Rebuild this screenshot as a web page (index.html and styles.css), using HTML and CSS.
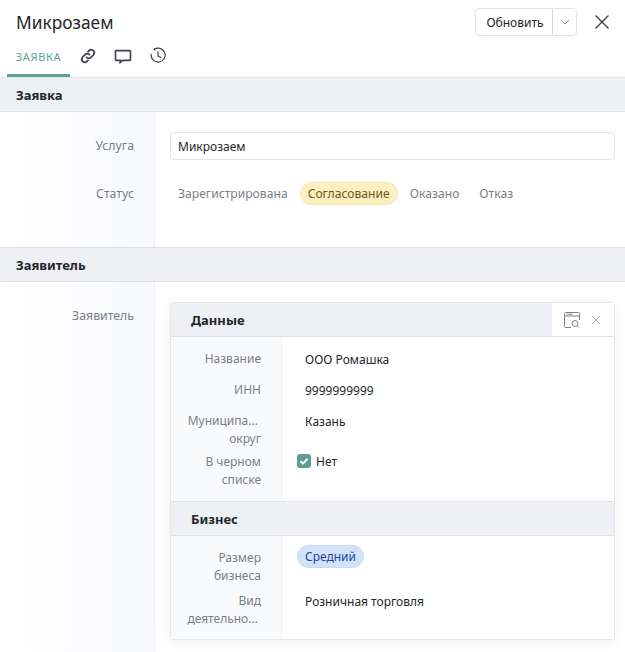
FILE: index.html
```html
<!DOCTYPE html>
<html lang="ru">
<head>
    <meta charset="UTF-8">
    <link rel="stylesheet" href="styles.css">
    <title>Микрозаем</title>
</head>
<body>
    <div class="top">
        <h1>Микрозаем</h1>
        <div class="actions">
            <div class="split">
                <span class="split-main">Обновить</span>
                <span class="split-arrow">
                    <svg width="10" height="6" viewBox="0 0 10 6"><path d="M1 1l4 4 4-4" fill="none" stroke="#8a8f98" stroke-width="1"/></svg>
                </span>
            </div>
            <svg class="close" width="16" height="16" viewBox="0 0 16 16"><path d="M1.5 1.5l13 13M14.5 1.5l-13 13" stroke="#3c4046" stroke-width="1.4" fill="none"/></svg>
        </div>
    </div>

    <div class="tabs">
        <div class="tab tab-active">ЗАЯВКА</div>
        <div class="tab tab-icon">
            <svg width="18" height="18" viewBox="0 0 18 18" fill="none" stroke="#3c4046" stroke-width="1.7" stroke-linecap="round"><path d="M7.6 10.4a3 3 0 0 0 4.3 0l2.4-2.4a3 3 0 0 0-4.3-4.3L9 4.7"/><path d="M10.4 7.6a3 3 0 0 0-4.3 0L3.7 10a3 3 0 0 0 4.3 4.3L9 13.3"/></svg>
        </div>
        <div class="tab tab-icon">
            <svg width="18" height="18" viewBox="0 0 18 18" fill="none" stroke="#3c4046" stroke-width="1.6"><path d="M2.2 3.6h13.6a.7.7 0 0 1 .7.7v8.4a.7.7 0 0 1-.7.7H8.5l-2.3 2v-2H2.2a.7.7 0 0 1-.7-.7V4.300a.7.7 0 0 1 .7-.7z"/></svg>
        </div>
        <div class="tab tab-icon">
            <svg width="18" height="18" viewBox="0 0 18 18" fill="none" stroke="#3c4046" stroke-width="1.2"><path d="M5 2.400A7 7 0 1 1 2.200 6.900"/><path d="M5.600 1.100L5 2.500l1.600.8" stroke-width="1"/><path d="M9 4.500v4.700l3.200 1.300"/></svg>
        </div>
    </div>

    <div class="section-head">Заявка</div>
    <div class="section request">
        <div class="labels">
            <div class="label label-service">Услуга</div>
            <div class="label label-status">Статус</div>
        </div>
        <div class="fields">
            <div class="input">Микрозаем</div>
            <div class="steps">
                <span class="step">Зарегистрирована</span>
                <span class="step step-current">Согласование</span>
                <span class="step">Оказано</span>
                <span class="step">Отказ</span>
            </div>
        </div>
    </div>

    <div class="section-head">Заявитель</div>
    <div class="section applicant">
        <div class="labels">
            <div class="label label-applicant">Заявитель</div>
        </div>
        <div class="fields">
            <div class="card">
                <div class="card-head">
                    <div class="card-title">Данные</div>
                    <div class="card-tools">
                        <svg width="18" height="18" viewBox="0 0 18 18" fill="none" stroke="#7d828a" stroke-width="1"><path d="M8 16.500H2.500a1 1 0 0 1-1-1v-13a1 1 0 0 1 1-1h13a1 1 0 0 1 1 1V9"/><path d="M1.500 5h15"/><path d="M3.500 3.200h6"/><circle cx="12" cy="12.500" r="3"/><path d="M14.200 14.700l2 2"/></svg>
                        <svg width="10" height="10" viewBox="0 0 10 10"><path d="M1 1l8 8M9 1L1 9" stroke="#a9adb3" stroke-width="1" fill="none"/></svg>
                    </div>
                </div>
                <div class="rows rows-data">
                    <div class="row row-1"><div class="k">Название</div><div class="v">ООО Ромашка</div></div>
                    <div class="row row-1"><div class="k">ИНН</div><div class="v">9999999999</div></div>
                    <div class="row row-2"><div class="k">Муниципа...&nbsp;<br>округ</div><div class="v">Казань</div></div>
                    <div class="row row-2"><div class="k">В черном<br>списке</div><div class="v v-check">
                        <svg width="14" height="14" viewBox="0 0 14 14"><rect width="14" height="14" rx="3" fill="#5a9e94"/><path d="M3.500 7.200l2.400 2.400 4.600-4.800" fill="none" stroke="#fff" stroke-width="2"/></svg>
                        Нет</div></div>
                </div>
                <div class="card-title card-title-sub">Бизнес</div>
                <div class="rows rows-biz">
                    <div class="row row-biz"><div class="k">Размер<br>бизнеса</div><div class="v v-tag"><span class="tag">Средний</span></div></div>
                    <div class="row row-last"><div class="k">Вид<br>деятельно...&nbsp;</div><div class="v">Розничная торговля</div></div>
                </div>
            </div>
        </div>
    </div>
</body>
</html>
```
FILE: styles.css
```css
html, body {
    height: 652px;
    overflow: hidden;
}
body {
    margin: 0;
    background-color: #fff;
    color: #23262b;
    font-family: "Noto Sans", sans-serif;
    font-size: 12px;
}
.top {
    display: flex;
    justify-content: space-between;
    align-items: flex-start;
    height: 44px;
    padding: 8px 15px 0 16px;
    box-sizing: border-box;
}
h1 {
    margin: 0;
    font-size: 17.33px;
    font-weight: 400;
    line-height: 28px;
}
.actions {
    display: flex;
    align-items: center;
    gap: 17px;
}
.split {
    display: flex;
    width: 102px;
    height: 28px;
    border: 1px solid #e2e4e8;
    border-radius: 4px;
    box-sizing: border-box;
    box-shadow: 0 1px 2px rgba(0, 0, 0, .03);
}
.split-main {
    flex: 1;
    padding-left: 2px;
    line-height: 27px;
    text-align: center;
}
.split-arrow {
    display: flex;
    align-items: center;
    justify-content: center;
    width: 23px;
    border-left: 1px solid #d5d7db;
}
.tabs {
    display: flex;
    height: 33px;
    padding-left: 7px;
    border-bottom: 1px solid #dfe1e6;
}
.tab {
    height: 33px;
    box-sizing: border-box;
}
.tab-active {
    width: 63px;
    border-bottom: 3px solid #5aa598;
    color: #5aa598;
    font-size: 11px;
    letter-spacing: .7px;
    line-height: 26px;
    text-align: center;
}
.tab-icon {
    width: 35px;
    padding-top: 3px;
    text-align: center;
}
.section-head {
    height: 33px;
    padding-left: 16px;
    background-color: #eff0f4;
    border-bottom: 1px solid #dfe1e6;
    font-size: 13px;
    font-weight: 700;
    line-height: 34px;
}
.section {
    display: flex;
}
.request {
    height: 135px;
    border-bottom: 1px solid #dfe1e6;
}
.applicant {
    height: 370px;
}
.labels {
    width: 155px;
    box-sizing: border-box;
    padding-right: 20px;
    background: linear-gradient(90deg, #fff, #f8f9fc);
    border-right: 1px solid #eef0f4;
    text-align: right;
    color: #7b7f86;
    font-size: 12.3px;
    line-height: 18px;
}
.label-service {
    margin-top: 25px;
}
.label-status {
    margin-top: 30px;
}
.label-applicant {
    margin-top: 25px;
}
.fields {
    flex: 1;
    padding: 20px 10px 0 15px;
    min-width: 0;
}
.input {
    height: 26px;
    padding-left: 7px;
    border: 1px solid #e2e4e8;
    border-radius: 4px;
    line-height: 27px;
}
.steps {
    display: flex;
    gap: 4px;
    margin-top: 22px;
    color: #7b7f86;
    font-size: 12.15px;
}
.step {
    height: 21px;
    padding: 0 7px;
    line-height: 21px;
    border: 1px solid transparent;
    border-radius: 12px;
}
.step-current {
    background-color: #fdf0c0;
    border-color: #f7e6a8;
    color: #6b5a14;
}
.card {
    border: 1px solid #e4e6ea;
    border-radius: 4px;
    box-shadow: 0 2px 14px rgba(40, 50, 70, .07);
    background-color: #fff;
}
.card-head {
    display: flex;
    justify-content: space-between;
    height: 33px;
    background-color: #eff0f4;
    border-bottom: 1px solid #dfe1e6;
}
.card-title {
    padding-left: 20px;
    font-size: 13px;
    font-weight: 700;
    line-height: 34px;
}
.card-title-sub {
    height: 33px;
    background-color: #eff0f4;
    border-top: 1px solid #dfe1e6;
    border-bottom: 1px solid #dfe1e6;
}
.card-tools {
    display: flex;
    align-items: center;
    gap: 10px;
    width: 62px;
    box-sizing: border-box;
    padding-left: 11px;
    background-color: #fff;
}
.row {
    display: grid;
    grid-template-columns: 111px 1fr;
}
.k {
    box-sizing: border-box;
    padding: 4px 21px 0 0;
    text-align: right;
    color: #7b7f86;
    line-height: 18px;
}
.v {
    padding: 5px 0 0 23px;
    line-height: 18px;
}
.row-1 {
    height: 31px;
}
.row-2 {
    height: 41px;
}
.rows-data {
    height: 144px;
    padding: 9px 0 11px;
    background: linear-gradient(90deg, #f9fafc 110px, #eef0f4 110px, #eef0f4 111px, #fff 111px);
}
.v-check {
    display: flex;
    align-items: flex-start;
    gap: 5px;
    padding: 4px 0 0 15px;
}
.v-check svg {
    margin-top: 1px;
}
.rows-biz {
    padding-top: 9px;
    background: linear-gradient(90deg, #f9fafc 110px, #eef0f4 110px, #eef0f4 111px, #fff 111px);
}
.v-tag {
    padding: 0 0 0 15px;
}
.tag {
    display: inline-block;
    height: 21px;
    padding: 0 7px;
    border-radius: 12px;
    border: 1px solid #c9dafa;
    background-color: #d3e2fb;
    color: #23489a;
    line-height: 21px;
}
.row-biz {
    height: 43px;
}
.row-last {
    height: 51px;
}
```
